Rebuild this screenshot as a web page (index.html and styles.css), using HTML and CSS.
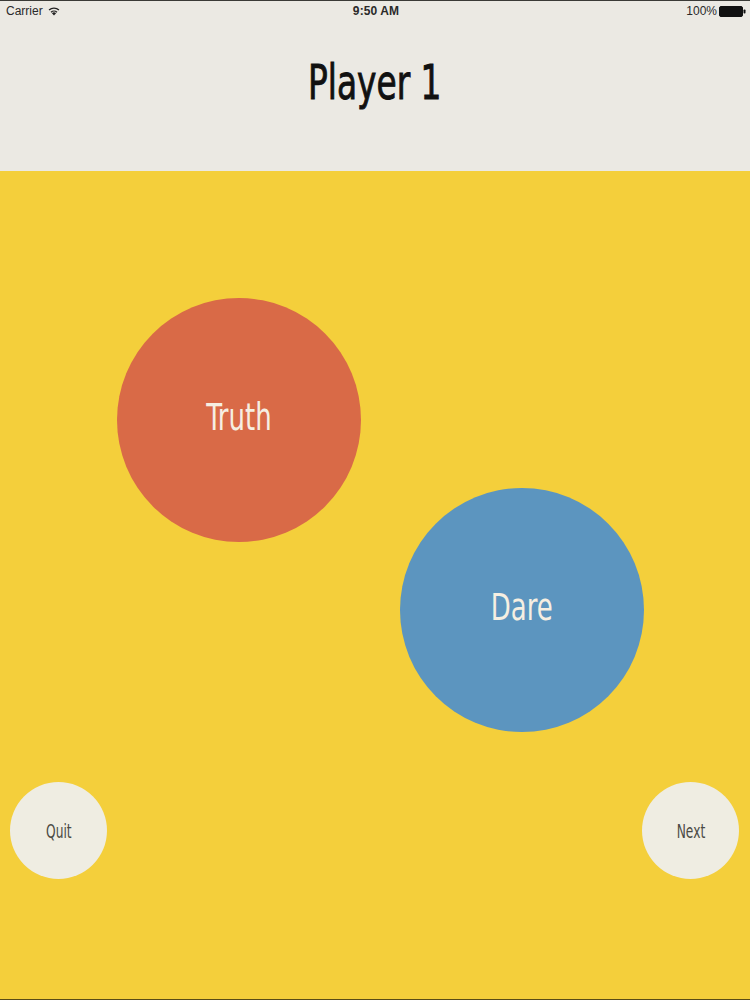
FILE: index.html
```html
<!DOCTYPE html>
<html>
<head>
<meta charset="utf-8">
<link rel="stylesheet" href="styles.css">
</head>
<body>
<div class="screen">
  <header class="header">
    <div class="status">
      <div class="status-left">
        <span>Carrier</span>
        <svg class="wifi" width="12" height="10" viewBox="0 0 12 10">
          <path d="M6 9.5 L3.9 7.2 A3 3 0 0 1 8.1 7.2 Z" fill="#222"/>
          <path d="M2.6 5.8 A4.9 4.9 0 0 1 9.4 5.8 L8.6 6.7 A3.7 3.7 0 0 0 3.4 6.7 Z" fill="#222"/>
          <path d="M0.6 3.6 A7.8 7.8 0 0 1 11.4 3.6 L10.5 4.6 A6.5 6.5 0 0 0 1.5 4.6 Z" fill="#222"/>
        </svg>
      </div>
      <div class="status-center">9:50 AM</div>
      <div class="status-right">
        <span>100%</span>
        <svg class="battery" width="27" height="11" viewBox="0 0 27 11">
          <rect x="0.5" y="0.5" width="23" height="10" rx="1.5" fill="#111" stroke="#111"/>
          <rect x="24.5" y="3.5" width="2" height="4" rx="0.8" fill="#111"/>
        </svg>
      </div>
    </div>
    <h1 class="title"><span class="narrow">Player 1</span></h1>
  </header>
  <main class="board">
    <div class="row row-truth">
      <button class="bubble truth"><span class="narrow">Truth</span></button>
    </div>
    <div class="row row-dare">
      <button class="bubble dare"><span class="narrow">Dare</span></button>
    </div>
    <div class="row row-actions">
      <button class="small"><span class="narrow-x">Quit</span></button>
      <button class="small"><span class="narrow-x">Next</span></button>
    </div>
  </main>
</div>
</body>
</html>
```

FILE: styles.css
```css
html, body {
  margin: 0;
  padding: 0;
}
body {
  width: 750px;
  height: 1000px;
  overflow: hidden;
  background: #f4cf3b;
}
.screen {
  width: 750px;
  height: 1000px;
  display: flex;
  flex-direction: column;
  border-top: 1px solid #3a3a36;
  border-bottom: 1px solid #5a4c16;
  box-sizing: border-box;
}
.header {
  background: #ebe9e3;
  height: 170px;
  display: flex;
  flex-direction: column;
  flex: none;
}
.status {
  height: 20px;
  display: flex;
  align-items: center;
  justify-content: space-between;
  padding: 0 4px 0 6px;
  font-family: "Liberation Sans", Arial, sans-serif;
  font-size: 12px;
  color: #2a2a2a;
}
.status-left, .status-right {
  flex: 1;
  display: flex;
  align-items: center;
  gap: 5px;
}
.status-right {
  justify-content: flex-end;
  gap: 2px;
}
.status-center {
  font-weight: bold;
  letter-spacing: 0.1px;
}
.wifi { margin-top: -1px; }
.narrow {
  display: inline-block;
  transform: scaleX(0.78);
}
.narrow-x {
  display: inline-block;
  transform: scaleX(0.68);
}
.title {
  margin: 31px 0 0;
  text-align: center;
  font-family: "DejaVu Sans Condensed", "DejaVu Sans", sans-serif;
  font-weight: normal;
  font-size: 48px;
  line-height: 60px;
  color: #111;
  -webkit-text-stroke: 0.9px #111;
}
.title .narrow { transform: scaleX(0.76); }
.board {
  flex: 1;
  display: flex;
  flex-direction: column;
  background: #f4cf3b;
}
.row { display: flex; }
.row-truth {
  margin-top: 127px;
  padding-left: 117px;
}
.row-dare {
  margin-top: -54px;
  justify-content: flex-end;
  padding-right: 106px;
}
.row-actions {
  margin-top: 50px;
  justify-content: space-between;
  padding: 0 11px 0 10px;
}
button {
  border: none;
  padding: 0;
  margin: 0;
  border-radius: 50%;
  display: flex;
  align-items: center;
  justify-content: center;
  font-family: "DejaVu Sans Condensed", "DejaVu Sans", sans-serif;
  font-weight: normal;
  cursor: pointer;
}
.bubble {
  width: 244px;
  height: 244px;
  font-size: 37px;
  color: #f6efe2;
  padding-bottom: 5px;
}
.truth { background: #d96a47; }
.dare { background: #5c95bf; }
.small {
  width: 97px;
  height: 97px;
  background: #efede2;
  color: #4a4a44;
  font-size: 20px;
}
```
